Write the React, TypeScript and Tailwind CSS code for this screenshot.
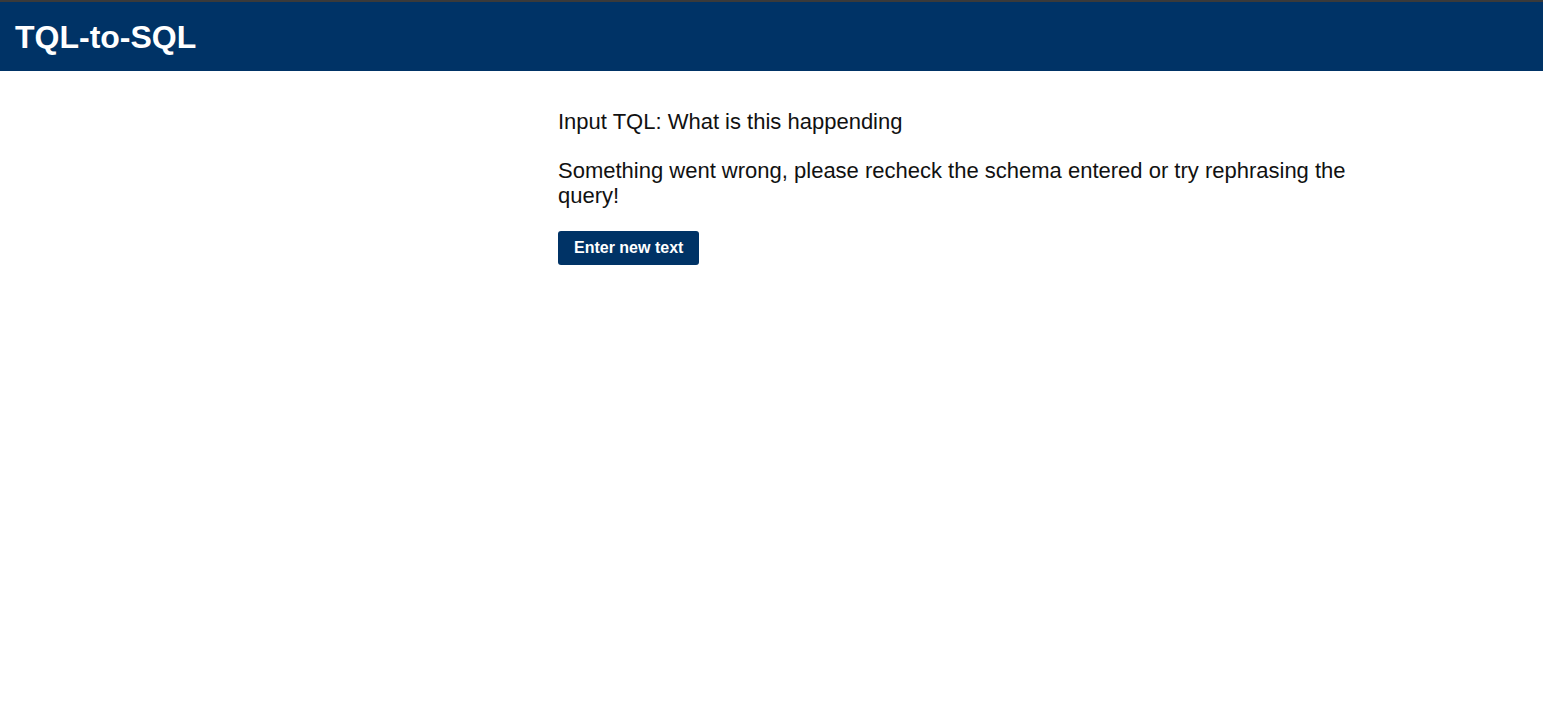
import React from 'react';

export default function App() {
  return (
    <div className="min-h-screen bg-white font-['Liberation_Sans',Arial,sans-serif] text-black">
      {/* Header */}
      <header className="border-t-2 border-[#3a3a3a] bg-[#003366] h-[71px] flex items-center px-[15px]">
        <h1 className="text-[32px] font-bold text-white leading-none">TQL-to-SQL</h1>
      </header>

      {/* Result */}
      <main className="ml-[558px] w-[820px] pt-[38px]">
        <p className="text-[22px] leading-[25px] text-[#111]">Input TQL: What is this happending</p>
        <p className="mt-[24px] text-[22px] leading-[25px] text-[#111]">
          Something went wrong, please recheck the schema entered or try rephrasing the query!
        </p>
        <button className="mt-[23px] h-[34px] px-[16px] rounded-[3px] bg-[#003366] text-white text-[16px] font-bold cursor-pointer">
          Enter new text
        </button>
      </main>
    </div>
  );
}
